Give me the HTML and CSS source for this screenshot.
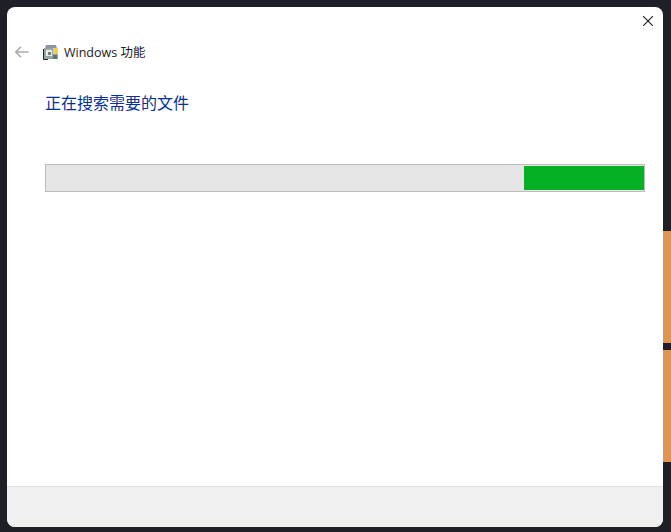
FILE: index.html
```html
<!DOCTYPE html>
<html lang="zh-CN">
<head>
    <meta charset="UTF-8"/>
    <title>Windows 功能</title>
    <link rel="stylesheet" href="styles.css">
</head>

<body>
    <main class="window">
        <div class="titlebar">
            <svg class="close" width="10" height="10" viewBox="0 0 10 10">
                <path d="M0 0L10 10M10 0L0 10" stroke="#1a1a1a" stroke-width="1.1" fill="none"/>
            </svg>
        </div>

        <div class="nav">
            <svg class="back" width="14" height="12" viewBox="0 0 14 12">
                <path d="M13.5 6H1M6 .8L.9 6L6 11.2" stroke="#a9a9a9" stroke-width="1.5" fill="none"/>
            </svg>
            <svg class="app-icon" width="16" height="16" viewBox="0 0 16 16">
                <path d="M3 1H13L14 5H2Z" fill="#8f93a8"/>
                <rect x="1" y="4" width="14" height="11" fill="#9aa6a0"/>
                <rect x="10" y="4" width="5" height="6" fill="#e9cf55"/>
                <rect x="3" y="6" width="6" height="6" fill="#e8ebe6"/>
                <rect x="5" y="8" width="3" height="3" fill="#6f7d78"/>
                <rect x="10" y="11" width="4" height="4" fill="#5f7478"/>
                <path d="M.5 5V15.5H5" stroke="#222" stroke-width="1" fill="none"/>
            </svg>
            <span class="nav-title">Windows 功能</span>
        </div>

        <section class="content">
            <h1>正在搜索需要的文件</h1>
            <div class="progress">
                <div class="progress-bar"></div>
            </div>
        </section>

        <footer class="footer"></footer>
    </main>

    <aside class="wallpaper">
        <div class="tile"></div>
        <div class="tile"></div>
    </aside>
</body>
</html>
```

FILE: styles.css
```css
* {
    margin: 0;
    padding: 0;
    box-sizing: border-box;
}

html, body {
    height: 100%;
}

body {
    display: flex;
    padding: 7px 0 5px 7px;
    background-color: #1f1f27;
    font-family: "Segoe UI", "Open Sans", "Noto Sans CJK SC", sans-serif;
    overflow: hidden;
}

.window {
    width: 656px;
    height: 520px;
    flex-shrink: 0;
    background-color: #fff;
    border-radius: 8px;
    display: flex;
    flex-direction: column;
    overflow: hidden;
}

.titlebar {
    height: 29px;
    display: flex;
    justify-content: flex-end;
    align-items: flex-end;
    padding-right: 10px;
    padding-bottom: 10px;
    flex-shrink: 0;
}

.nav {
    height: 32px;
    display: flex;
    align-items: center;
    padding-left: 8px;
    flex-shrink: 0;
}

.back {
    margin-right: 14px;
}

.app-icon {
    margin-right: 5px;
}

.nav-title {
    font-size: 12.5px;
    color: #1a1a1a;
    padding-bottom: 2px;
}

.content {
    flex: 1;
    padding: 22px 18px 0 38px;
}

.content h1 {
    font-family: "Noto Sans CJK SC", sans-serif;
    font-size: 16px;
    line-height: 24px;
    font-weight: 400;
    color: #003399;
    margin-bottom: 50px;
}

.progress {
    height: 28px;
    background-color: #e6e6e6;
    border: 1px solid #bcbcbc;
    padding: 1px 0;
    display: flex;
    justify-content: flex-end;
}

.progress-bar {
    width: 120px;
    background-color: #06b025;
}

.footer {
    height: 41px;
    flex-shrink: 0;
    background-color: #f0f0f0;
    border-top: 1px solid #dfdfdf;
}

.wallpaper {
    width: 8px;
    flex-shrink: 0;
    padding-top: 224px;
    display: flex;
    flex-direction: column;
    gap: 7px;
}

.tile {
    height: 112px;
    background-color: #e0964e;
}
```
